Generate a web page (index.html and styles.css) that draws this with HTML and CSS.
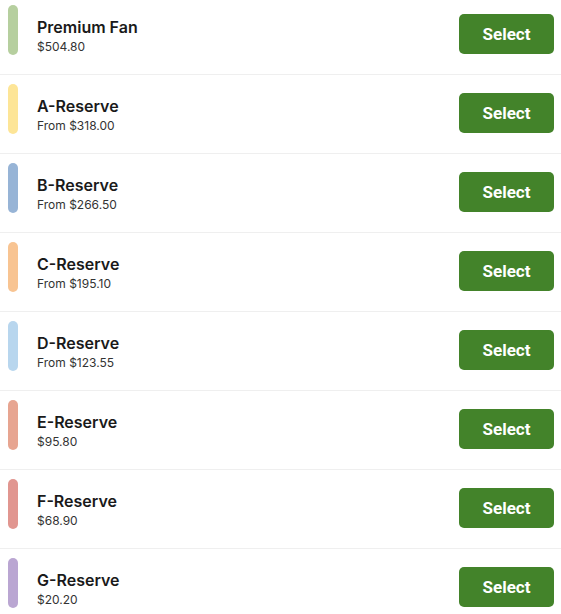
FILE: index.html
```html
<!DOCTYPE html>
<html lang="en">
<head>
  <meta charset="UTF-8" />
  <meta name="viewport" content="width=device-width, initial-scale=1.0"/>
  <title>Select Seats</title>
  <link rel="stylesheet" href="styles.css">
</head>
<body>
  <ul class="tiers">
    <li class="tier">
      <span class="swatch green"></span>
      <div class="info">
        <h3>Premium Fan</h3>
        <p>$504.80</p>
      </div>
      <button>Select</button>
    </li>
    <li class="tier">
      <span class="swatch yellow"></span>
      <div class="info">
        <h3>A-Reserve</h3>
        <p>From $318.00</p>
      </div>
      <button>Select</button>
    </li>
    <li class="tier">
      <span class="swatch blue"></span>
      <div class="info">
        <h3>B-Reserve</h3>
        <p>From $266.50</p>
      </div>
      <button>Select</button>
    </li>
    <li class="tier">
      <span class="swatch orange"></span>
      <div class="info">
        <h3>C-Reserve</h3>
        <p>From $195.10</p>
      </div>
      <button>Select</button>
    </li>
    <li class="tier">
      <span class="swatch sky"></span>
      <div class="info">
        <h3>D-Reserve</h3>
        <p>From $123.55</p>
      </div>
      <button>Select</button>
    </li>
    <li class="tier">
      <span class="swatch salmon"></span>
      <div class="info">
        <h3>E-Reserve</h3>
        <p>$95.80</p>
      </div>
      <button>Select</button>
    </li>
    <li class="tier">
      <span class="swatch rose"></span>
      <div class="info">
        <h3>F-Reserve</h3>
        <p>$68.90</p>
      </div>
      <button>Select</button>
    </li>
    <li class="tier">
      <span class="swatch purple"></span>
      <div class="info">
        <h3>G-Reserve</h3>
        <p>$20.20</p>
      </div>
      <button>Select</button>
    </li>
  </ul>
</body>
</html>
```

FILE: styles.css
```css
* {
  box-sizing: border-box;
  margin: 0;
  padding: 0;
}
body {
  font-family: Inter, 'Noto Sans', sans-serif;
  background: #fff;
  color: #1c1c1c;
  overflow: hidden;
}
.tiers {
  list-style: none;
  margin-top: -4px;
}
.tier {
  display: flex;
  align-items: center;
  height: 79px;
  padding: 9px 7px 11px 8px;
  border-bottom: 1px solid #efefef;
}
.swatch {
  align-self: flex-start;
  width: 10px;
  height: 50px;
  border-radius: 5px;
  flex-shrink: 0;
}
.green { background: #b6cf9f; }
.yellow { background: #fde597; }
.blue { background: #97b4d6; }
.orange { background: #f8c492; }
.sky { background: #b8d6ee; }
.salmon { background: #e7a591; }
.rose { background: #e19690; }
.purple { background: #baa6d2; }
.info {
  flex: 1;
  margin-left: 19px;
  margin-top: 4px;
}
.info h3 {
  font-size: 16px;
  font-weight: 600;
  line-height: 20px;
  margin-bottom: 2px;
  color: #1a1a1a;
}
.info p {
  font-size: 12px;
  line-height: 16px;
  color: #333;
}
.tier button {
  width: 95px;
  height: 40px;
  border: none;
  border-radius: 5px;
  background: #43832a;
  color: #fff;
  font-family: Roboto, 'Liberation Sans', sans-serif;
  font-size: 17px;
  font-weight: 700;
  cursor: pointer;
}
```
